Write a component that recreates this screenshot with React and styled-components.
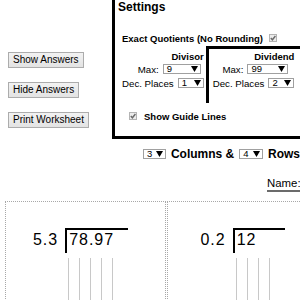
import React from "react";
import styled, { createGlobalStyle } from "styled-components";

const GlobalStyle = createGlobalStyle`
  html, body {
    margin: 0;
    padding: 0;
    overflow: hidden;
    background: #fff;
  }
  body {
    font-family: "Liberation Sans", Arial, sans-serif;
    color: #000;
  }
`;

const problems = [
  { divisor: "5.3", dividend: "78.97", lines: 5 },
  { divisor: "0.2", dividend: "12", lines: 4 },
  { divisor: "4.1", dividend: "36.9", lines: 4 },
];

const Arrow = () => (
  <svg width="7" height="6" viewBox="0 0 7 6">
    <polygon points="0,0 7,0 3.5,6" fill="#000" />
  </svg>
);

const Check = () => (
  <svg width="6" height="6" viewBox="0 0 6 6">
    <polyline points="0.8,3 2.4,4.8 5.4,1" fill="none" stroke="#6a6a6a" strokeWidth="1.4" />
  </svg>
);

const Select = ({ value, width, size }) => (
  <SelectBox $width={width} $size={size}>
    <span>{value}</span>
    <Arrow />
  </SelectBox>
);

const Checkbox = () => (
  <CheckBox>
    <Check />
  </CheckBox>
);

const App = () => {
  return (
    <Page>
      <GlobalStyle />
      <Top>
        <ButtonCol>
          <Button>Show Answers</Button>
          <Button>Hide Answers</Button>
          <Button>Print Worksheet</Button>
        </ButtonCol>
        <Panel>
          <Title>Settings</Title>
          <ExactRow>
            Exact Quotients (No Rounding)
            <Checkbox />
          </ExactRow>
          <LimitsRow>
            <DivisorBlock>
              <BlockTitle>Divisor</BlockTitle>
              <FieldRow $inset={3}>
                Max: <Select value="9" width={38} />
              </FieldRow>
              <FieldRow $spaced>
                Dec. Places <Select value="1" width={26} />
              </FieldRow>
            </DivisorBlock>
            <DividendBlock>
              <BlockTitle>Dividend</BlockTitle>
              <FieldRow $inset={6}>
                Max: <Select value="99" width={41} />
              </FieldRow>
              <FieldRow $spaced>
                Dec. Places <Select value="2" width={26} />
              </FieldRow>
            </DividendBlock>
          </LimitsRow>
          <GuideRow>
            <Checkbox />
            Show Guide Lines
          </GuideRow>
        </Panel>
      </Top>

      <CountRow>
        <Select value="3" width={26} size={10} />
        Columns &amp;
        <Select value="4" width={27} size={10} />
        Rows
      </CountRow>

      <NameRow>
        <NameLine>Name:</NameLine>
      </NameRow>

      <Grid>
        {problems.map((p, i) => (
          <Cell key={i}>
            <Problem>
              <Divisor>{p.divisor}</Divisor>
              <BracketCol>
                <Bracket $width={p.lines * 11 + 8}>{p.dividend}</Bracket>
                <Guides>
                  {Array.from({ length: p.lines }).map((_, j) => (
                    <GuideLine key={j} />
                  ))}
                </Guides>
              </BracketCol>
            </Problem>
          </Cell>
        ))}
      </Grid>
    </Page>
  );
};

export default App;

const Page = styled.div`
  width: 300px;
  height: 300px;
  overflow: hidden;
`;

const Top = styled.div`
  display: flex;
  align-items: flex-start;
`;

const ButtonCol = styled.div`
  display: flex;
  flex-direction: column;
  align-items: flex-start;
  gap: 14px;
  width: 112px;
  padding: 52px 0 0 8px;
  box-sizing: border-box;
  flex-shrink: 0;
`;

const Button = styled.button`
  height: 16px;
  padding: 0 4px;
  font-family: "Liberation Sans", Arial, sans-serif;
  font-size: 10px;
  color: #000;
  background: linear-gradient(#f2f2f2, #e3e3e3);
  border: 1px solid #acacac;
  border-radius: 0;
  line-height: 14px;
`;

const Panel = styled.div`
  flex-shrink: 0;
  border: 3px solid #000;
  border-top: 0;
  padding: 0 14px 14px 3px;
`;

const Title = styled.div`
  font-size: 12px;
  font-weight: bold;
  line-height: 14px;
`;

const ExactRow = styled.div`
  display: flex;
  align-items: center;
  gap: 6px;
  height: 12px;
  margin-top: 18px;
  padding-left: 4px;
  font-size: 9.5px;
  font-weight: bold;
  white-space: nowrap;
`;

const LimitsRow = styled.div`
  display: flex;
  align-items: flex-start;
  margin-top: 2px;
`;

const DivisorBlock = styled.div`
  display: flex;
  flex-direction: column;
  align-items: flex-end;
  padding: 5px 2px 0 4px;
`;

const DividendBlock = styled.div`
  display: flex;
  flex-direction: column;
  align-items: flex-end;
  border-top: 3px solid #000;
  border-left: 3px solid #000;
  padding: 2px 8px 14px 4px;
`;

const BlockTitle = styled.div`
  font-size: 9.5px;
  font-weight: bold;
  line-height: 12px;
`;

const FieldRow = styled.div`
  display: flex;
  align-items: center;
  gap: 4px;
  height: 12px;
  margin-top: ${(p) => (p.$spaced ? 2 : 0)}px;
  padding-right: ${(p) => p.$inset || 0}px;
  font-size: 9.7px;
  white-space: nowrap;
`;

const SelectBox = styled.span`
  display: inline-flex;
  align-items: center;
  justify-content: space-between;
  box-sizing: border-box;
  width: ${(p) => p.$width}px;
  height: ${(p) => p.$size || 10}px;
  padding: 0 2px 0 3px;
  border: 1px solid #a0a0a0;
  background: #fff;
  font-size: 9.5px;
  font-weight: normal;
  line-height: 8px;
`;

const CheckBox = styled.span`
  display: inline-flex;
  align-items: center;
  justify-content: center;
  box-sizing: border-box;
  width: 8px;
  height: 8px;
  border: 1px solid #b4b4b4;
  background: #ececec;
  flex-shrink: 0;
`;

const GuideRow = styled.div`
  display: flex;
  align-items: center;
  gap: 7px;
  height: 12px;
  margin-top: 7px;
  padding-left: 11px;
  font-size: 9.5px;
  font-weight: bold;
`;

const CountRow = styled.div`
  display: flex;
  align-items: center;
  gap: 5px;
  height: 12px;
  margin-top: 9px;
  padding-left: 143px;
  font-size: 12px;
  font-weight: bold;
  white-space: nowrap;
`;

const NameRow = styled.div`
  display: flex;
  margin-top: 16px;
  padding-left: 267px;
`;

const NameLine = styled.div`
  flex-shrink: 0;
  width: 200px;
  font-size: 11.4px;
  line-height: 14px;
  border-bottom: 2px solid #6b6b6b;
`;

const Grid = styled.div`
  display: flex;
  gap: 1px;
  margin-top: 9px;
  padding-left: 5px;
`;

const Cell = styled.div`
  flex-shrink: 0;
  display: flex;
  flex-direction: column;
  align-items: center;
  box-sizing: border-box;
  width: 161px;
  height: 150px;
  padding: 26px 10px 0 0;
  border: 1px dotted #a8a8a8;
`;

const Problem = styled.div`
  display: flex;
  align-items: flex-start;
`;

const Divisor = styled.div`
  margin-right: 7px;
  padding-top: 2px;
  font-size: 16px;
  letter-spacing: 1px;
  line-height: 20px;
`;

const BracketCol = styled.div`
  display: flex;
  flex-direction: column;
`;

const Bracket = styled.div`
  box-sizing: border-box;
  width: ${(p) => p.$width}px;
  padding: 0 0 3px 2px;
  border-top: 2px solid #000;
  border-left: 2px solid #000;
  font-size: 16px;
  letter-spacing: 1px;
  line-height: 20px;
`;

const Guides = styled.div`
  display: flex;
  gap: 10px;
  height: 60px;
  margin-top: 5px;
  padding-left: 3px;
`;

const GuideLine = styled.div`
  width: 1px;
  background: #c8c8c8;
`;
